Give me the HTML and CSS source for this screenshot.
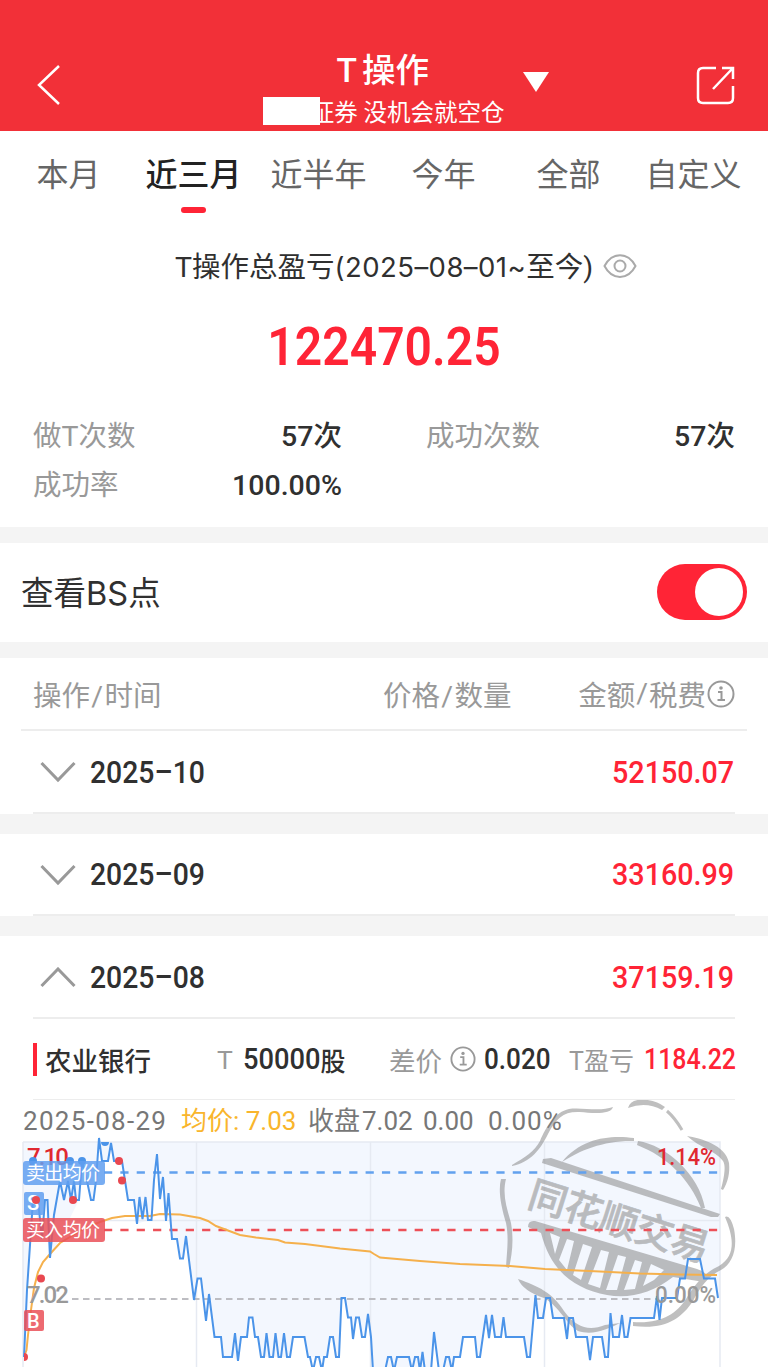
FILE: index.html
```html
<!DOCTYPE html>
<html lang="zh-CN">
<head>
    <meta charset="UTF-8">
    <title>T操作</title>
    <link rel="stylesheet" href="styles.css">
</head>
<body>
    <header class="header">
        <svg class="back-icon" width="26" height="42" viewBox="0 0 26 42"><path d="M23 2 L3 21 L23 40"/></svg>
        <div class="header-center">
            <h1 class="title"><span>T</span>操作<i class="dropdown"></i></h1>
            <div class="account"><span class="mask"></span>证券 没机会就空仓</div>
        </div>
        <svg class="share-icon" width="40" height="40" viewBox="0 0 40 40">
            <path d="M20 3 H7 Q2 3 2 8 V33 Q2 38 7 38 H32 Q37 38 37 33 V21"/>
            <path d="M26 3 H37 V14 M36.500 3.500 L17 24"/>
        </svg>
    </header>

    <nav class="tabs">
        <a>本月</a>
        <a class="active">近三月</a>
        <a>近半年</a>
        <a>今年</a>
        <a>全部</a>
        <a>自定义</a>
    </nav>

    <section class="summary">
        <div class="summary-label">
            <span>T操作总盈亏<span class="range">(2025–08–01~</span>至今)</span>
            <svg width="34" height="26" viewBox="0 0 34 26">
                <path d="M1.500 13 C9 -1.500 25 -1.500 32.500 13 C25 27.500 9 27.500 1.500 13 Z"/>
                <circle cx="17" cy="13" r="5.500"/>
            </svg>
        </div>
        <div class="total">122470.25</div>
        <div class="stats">
            <div class="stat"><label>做T次数</label><b>57次</b></div>
            <div class="stat"><label>成功次数</label><b>57次</b></div>
            <div class="stat"><label>成功率</label><b>100.00%</b></div>
        </div>
    </section>

    <section class="switch-row">
        <span>查看<span class="bs">BS</span>点</span>
        <div class="switch"></div>
    </section>

    <section class="list">
        <div class="list-head">
            <span class="col-op">操作<i>/</i>时间</span>
            <span class="col-price">价格<i>/</i>数量</span>
            <span class="col-amount">金额<i>/</i>税费<svg class="info" width="28" height="28" viewBox="0 0 28 28"><circle cx="14" cy="14" r="12.500"/><path d="M11 12 H14.500 V20 M10.500 20 H18"/><circle class="dot" cx="14" cy="8" r="1.800"/></svg></span>
        </div>

        <div class="month">
            <svg class="arrow" width="36" height="22" viewBox="0 0 36 22"><path d="M1.500 2 L18 19 L34.500 2"/></svg>
            <span class="month-name">2025–10</span>
            <span class="amount">52150.07</span>
        </div>
        <div class="month">
            <svg class="arrow" width="36" height="22" viewBox="0 0 36 22"><path d="M1.500 2 L18 19 L34.500 2"/></svg>
            <span class="month-name">2025–09</span>
            <span class="amount">33160.99</span>
        </div>
        <div class="month open">
            <svg class="arrow" width="36" height="22" viewBox="0 0 36 22"><path d="M1.500 19 L18 2 L34.500 19"/></svg>
            <span class="month-name">2025–08</span>
            <span class="amount">37159.19</span>
        </div>

        <div class="stock">
            <span class="stock-name">农业银行</span>
            <span class="cell-t"><em>T</em><b><span class="num">50000</span>股</b></span>
            <span class="cell-diff"><em>差价</em><svg class="info" width="26" height="26" viewBox="0 0 28 28"><circle cx="14" cy="14" r="12.500"/><path d="M11 12 H14.500 V20 M10.500 20 H18"/><circle class="dot" cx="14" cy="8" r="1.800"/></svg><b class="num">0.020</b></span>
            <span class="cell-profit"><em>T盈亏</em><b class="num">1184.22</b></span>
        </div>
    </section>

    <section class="chart-box">
        <div class="quote">
            <span class="q-date">2025-08-29</span>
            <span class="q-avg">均价: 7.03</span>
            <span class="q-close">收盘</span>
            <span class="q-price">7.02</span>
            <span class="q-change">0.00</span>
            <span class="q-percent">0.00%</span>
        </div>

        <svg class="chart" width="768" height="267" viewBox="0 1100 768 267">
            <!-- area above the price line -->
            <path class="area" d="M23 1142 H720 V1298 H718 L715 1278.500 H704 L700 1259 H688 L685 1278.500 H680 L677 1298 H662 L659.500 1320 L657 1296 L654 1318 H630.500 L627.500 1337 H624.500 L622 1315 L619 1337 H613 L610.500 1313 L608 1357 H605 L602 1337 H593 L590 1360 L587 1337 H576 L573 1318 H569 L567 1339 L564 1318 H553 L550 1298 H546 L543 1318 H538 L535.500 1295 L530 1357 H527 L524 1337 H506 L503.500 1317 L501 1337 H495 L492 1315 L489 1337 L486 1315 L480 1357 H477 L475 1337 H463 L460 1357 H454 L452 1371 L443 1371 L439 1371 L434 1332 L431 1371 H373 L371 1337 L368 1314 L365 1337 H362 L359 1317.500 H356 L353 1339 L351 1317.500 H348 L345 1298 H341.500 L339 1357 H336 L333 1337 H330 L327 1357 H308 L304.500 1337 H293 L290 1357 H261 L258 1337 H255 L252.500 1317.500 H249 L247 1337 H241 L238 1361 L232 1357 H223 L221 1337 H214.500 L209 1294 L206 1321 L201 1278.500 H197.500 L194 1300 L186 1236 L183 1258.500 H180 L177 1239 H172 L168.500 1193 L166 1221 L163 1177 L160 1199 L157 1154 L151.500 1220 H148 L137 1224 L134 1200 H128 L122 1161 H114 L111 1143 L108 1161 H102 L99 1142 L93.500 1200 H91 L82 1161 L79 1200 L50 1258 L45 1200 L42 1239 L33 1200 L24 1357 H23 Z"/>
            <g class="grid">
                <path d="M23 1142 H720 V1367 M23 1142 V1367 M196.500 1142 V1367 M370.500 1142 V1367 M544.500 1142 V1367 M23 1220.500 H720"/>
            </g>

            <!-- watermark stamp -->
            <g class="stamp">
                <path d="M512 1165 C524 1158 535 1151 540 1141 C546 1127 555 1112 569 1109 C581 1107 600 1112 613 1107 C611 1115 592 1113 580 1112 C564 1111 556 1118 548 1134 C540 1150 531 1162 512 1166 Z"/>
                <path d="M628 1108 Q630 1100 642 1099.500 Q656 1100 665 1107 L662 1110 Q646 1101 628 1108 Z"/>
                <path class="thin" d="M667 1111 Q675 1118 682 1130"/>
                <path d="M687 1136 C700 1138 726 1145 729 1163 C730 1173 728 1182 723 1190 L721 1189 Q727 1167 723 1161 C715 1150 700 1148 687 1136 Z"/>
                <path d="M725 1217 Q730 1214 734 1229 C738 1250 732 1264 721 1270 C708 1276 699 1289 693 1301 C681 1319 665 1330 633 1326 V1322 C661 1324 676 1314 686 1299 C695 1284 705 1272 719 1266 C737 1255 733 1236 725 1217 Z"/>
                <path d="M501 1179 H506 C502 1195 507 1208 511 1223 C514 1240 512 1255 509 1268 L506 1267 C507 1250 509 1238 506 1223 C501 1206 498 1191 501 1179 Z"/>
                <path d="M518 1279 C538 1286 553 1293 564 1311 C577 1329 590 1331 605 1325 L620 1323 C608 1329 593 1336 578 1331 C566 1324 560 1307 544 1298 Q523 1291 518 1279 Z"/>
                <path d="M562 1162 C582 1137 612 1135 634 1138 V1141 C606 1140 580 1150 562 1162 Z"/>
                <path d="M638 1141 C666 1145 699 1174 705 1208 L701 1208 C690 1180 668 1157 637 1145 Z"/>
                <path d="M543 1159 L551 1158 L720 1214 L718 1217 L711 1217 L542 1163 Z"/>
                <path fill-rule="evenodd" d="M528 1227 Q528 1220 535 1221 L697 1269 Q712 1274 704 1282 L673 1277 C652 1293 630 1299 607 1295 C575 1289 551 1272 541 1233 L528 1227 Z M550 1233 L560 1237 L555 1254 Z M567 1239 L574 1241 L567 1270 L559 1260 Z M583 1244 L592 1247 L581 1280 L573 1275 Z M601 1250 L609 1252 L600 1288 L588 1284 Z M618 1255 L626 1257 L617 1290 L606 1290 Z M635 1260 L642 1262 L635 1289 L624 1290 Z M651 1264 L664 1270 L654 1280 L643 1286 Z"/>
                <text transform="translate(526 1206) rotate(17.500)" textLength="187" x="0" y="0">同花顺交易</text>
            </g>

            <path class="dash sell" d="M104 1172.500 H720"/>
            <path class="dash buy" d="M104 1230 H720"/>
            <path class="dash zero" d="M72 1299 H656"/>

            <path class="avg" d="M24 1357 L26.500 1350 L28 1335 L31 1310 L34 1288 L38 1272 L43 1262 L50 1254 L60 1243 L70 1237 L85 1228 L100 1222 L112 1218 L125 1216 H150 L160 1214 L180 1214.500 L200 1218 L208 1221 L216 1226 L228 1230.500 L240 1235 L256 1237.500 L278 1240 L285 1242.500 L305 1244 L340 1248.500 L370 1251.500 L374 1254 L380 1257.500 L420 1261 L460 1264 L510 1266 L545 1269 L600 1271.500 L640 1273.500 L680 1274.500 L717 1275"/>
            <path class="price" d="M24 1357 L27 1290 L33 1200 L38 1200 L42 1239 L45 1200 H47.500 L50 1258 L54 1215 L60 1181 L64 1200 L68 1181 L71 1200 L74 1181 L76 1200 H79 L82 1161 L87 1181 L91 1200 H93.500 L96 1181 L99 1138 L102 1161 H108 L111 1143 L114 1161 H122 L128 1200 H134 L137 1224 L139.500 1197 L142.500 1219 L145.500 1197 L148 1220 H151.500 L154 1180 L157 1154 L160 1199 L163 1177 L166 1221 L168.500 1193 L172 1239 H177 L180 1258.500 H183 L186 1236 L194 1300 L197.500 1278.500 H201 L206 1321 L209 1294 L214.500 1337 H221 L223 1357 H232 L235 1333 L238 1361 L241 1337 H247 L249 1317.500 H252.500 L255 1337 H258 L261 1357 H264 L266.500 1333 L269.500 1357 H273 L275.500 1333 L278.500 1357 H281 L284 1333 L287 1357 H290 L293 1337 H304.500 L308 1357 H310 L313 1371 L316 1357 H319 L322 1371 L324 1357 H327 L330 1337 H333 L336 1357 H339 L341.500 1298 H345 L348 1317.500 H351 L353 1339 L356 1317.500 H359 L362 1337 H365 L368 1314 L371 1337 L373 1371 H385 L388 1357 H391 L394 1371 L397 1357 H409 L412 1371 L415 1357 H418 L420 1371 L422.500 1352 L425 1371 H431 L434 1332 L439 1371 H443 L446 1357 H449 L452 1371 L454 1357 H460 L463 1337 H475 L477 1357 H480 L486 1315 L489 1338 L492 1315 L495 1337 H501 L503.500 1317 L506 1337 H524 L527 1357 H530 L535.500 1295 L538 1318 H543 L546 1298 H550 L553 1318 H564 L567 1339 L569 1318 H573 L576 1337 H587 L590 1360 L593 1337 H602 L605 1357 H608 L610.500 1313 L613 1337 H619 L622 1315 L624.500 1337 H627.500 L630.500 1318 H654 L657 1296 L659.500 1320 L662 1298 H677 L680 1278.500 H685 L688 1259 H700 L704 1278.500 H715 L718 1298"/>

            <text class="axis up" x="27" y="1165" textLength="42">7.10</text>
            <text class="axis up" x="657" y="1165" textLength="59" lengthAdjust="spacingAndGlyphs">1.14%</text>
            <text class="axis mid" x="27" y="1303" textLength="42">7.02</text>
            <text class="axis mid" x="655" y="1303" textLength="61" lengthAdjust="spacingAndGlyphs">0.00%</text>

            <g class="sell-dot">
                <circle cx="33" cy="1161" r="4"/><circle cx="70" cy="1161" r="4"/><circle cx="82" cy="1161" r="4"/>
                <path d="M101 1142 A4 4 0 0 0 109 1142 Z"/>
            </g>

            <rect class="tag-sell" x="23" y="1161" width="82" height="24" rx="3"/>
            <text class="tag-text" x="26" y="1180" textLength="74">卖出均价</text>
            <rect class="tag-sell" x="24" y="1192" width="20" height="23" rx="2"/>
            <text class="tag-text mark" x="27" y="1210">S</text>
            <rect class="tag-buy" x="23" y="1218" width="82" height="24" rx="3"/>
            <text class="tag-text" x="26" y="1237" textLength="74">买入均价</text>
            <rect class="tag-buy" x="24" y="1310" width="20" height="21" rx="2"/>
            <text class="tag-text mark" x="27" y="1328">B</text>

            <g class="buy-dot">
                <circle cx="36" cy="1200" r="4"/><circle cx="73" cy="1200" r="4"/><circle cx="119" cy="1161" r="4"/>
                <circle cx="122" cy="1180.500" r="4"/><circle cx="41" cy="1278.500" r="4"/><path d="M24 1353 A4 4 0 0 1 24 1361 Z"/>
            </g>
        </svg>
    </section>
</body>
</html>
```
FILE: styles.css
```css
:root {
    --header-red: #f23038;
    --red: #ff2436;
    --dark: #303030;
    --gray: #999;
    --line: #ededed;
    --band: #f4f4f4;
}

* {
    margin: 0;
    padding: 0;
    box-sizing: border-box;
}

body {
    width: 768px;
    height: 1367px;
    overflow: hidden;
    background: #fff;
    color: var(--dark);
    font-family: Roboto, "Noto Sans CJK SC", sans-serif;
    white-space: nowrap;
}

svg {
    display: block;
    fill: none;
    flex: none;
}

em, i {
    font-style: normal;
}

/* header */
.header {
    height: 131px;
    padding: 48px 32px 0 36px;
    background: var(--header-red);
    color: #fff;
    display: flex;
    justify-content: space-between;
}

.back-icon {
    margin-top: 16px;
    stroke: #fff;
    stroke-width: 2.5;
}

.share-icon {
    margin-top: 17px;
    stroke: #fff;
    stroke-width: 2.5;
}

.header-center {
    width: 242px;
    margin-right: -9px;
}

.title {
    position: relative;
    height: 46px;
    padding-left: 74px;
    font-size: 33.5px;
    line-height: 46px;
    font-weight: 500;
}

.title span {
    margin-right: 5px;
}

.dropdown {
    position: absolute;
    left: 260px;
    top: 24px;
    border: 13px solid transparent;
    border-top: 20px solid #fff;
    border-bottom: 0;
}

.account {
    position: relative;
    height: 36px;
    line-height: 38px;
    font-size: 23.5px;
    text-align: right;
}

.mask {
    position: absolute;
    left: 0;
    top: 3px;
    width: 57px;
    height: 28px;
    background: #fff;
}

/* tabs */
.tabs {
    height: 96px;
    padding: 20px 12px 0 6px;
    display: grid;
    grid-template-columns: repeat(6, 125px);
    font-size: 32px;
    line-height: 48px;
    text-align: center;
    color: #666;
}

.tabs .active {
    color: #222;
    font-weight: 500;
}

.tabs .active::after {
    content: "";
    display: block;
    width: 25px;
    height: 6px;
    margin: 8px auto 0;
    border-radius: 3px;
    background: var(--red);
}

/* summary */
.summary {
    height: 300px;
}

.summary-label {
    height: 78px;
    padding-left: 175px;
    display: flex;
    align-items: center;
    gap: 10px;
    font-size: 28.5px;
}

.summary-label > span {
    margin-top: -3px;
}

.range {
    font-family: Inter, sans-serif;
    font-size: 27.5px;
    letter-spacing: 0.45px;
}

.summary-label svg {
    stroke: #aaa;
    stroke-width: 2;
}

.total {
    height: 82px;
    line-height: 84px;
    text-align: center;
    font-size: 54px;
    font-weight: 600;
    transform: scaleX(0.89);
    color: var(--red);
}

.stats {
    padding: 25px 33px 0;
    display: grid;
    grid-template-columns: 309px 309px;
    justify-content: space-between;
    font-size: 28.5px;
    line-height: 49px;
}

.stat {
    display: flex;
    justify-content: space-between;
}

.stat label {
    color: var(--gray);
}

.stat b {
    font-weight: 500;
}

/* switch */
.switch-row {
    height: 131px;
    padding: 0 21px 1px;
    border: solid var(--band);
    border-width: 16px 0;
    display: flex;
    justify-content: space-between;
    align-items: center;
    font-size: 32.5px;
}

.switch-row > span {
    margin-top: -3px;
}

.bs {
    font-family: Inter, sans-serif;
}

.switch {
    width: 90px;
    height: 56px;
    padding: 4px;
    border-radius: 28px;
    background: var(--red);
}

.switch::after {
    content: "";
    display: block;
    width: 48px;
    height: 48px;
    margin-left: auto;
    border-radius: 50%;
    background: #fff;
}

/* list */
.list-head {
    height: 73px;
    margin: 0 21px;
    padding: 0 12px;
    border-bottom: 2px solid var(--line);
    display: grid;
    grid-template-columns: 350px 1fr auto;
    align-items: center;
    font-size: 28.5px;
    color: var(--gray);
}

.list-head i {
    margin: 0 1.3px;
}

.col-amount {
    display: flex;
    align-items: center;
    gap: 1px;
}

.list-head .col-amount i {
    margin: 0;
}

.info {
    stroke: var(--gray);
    stroke-width: 2;
}

.info .dot {
    fill: var(--gray);
    stroke: none;
}

.month {
    height: 102.5px;
    padding: 0 34px 0 40px;
    border-bottom: 20px solid var(--band);
    background: linear-gradient(var(--line), var(--line)) 33px 100% / 702px 2px no-repeat padding-box;
    display: flex;
    align-items: center;
    font-size: 31.5px;
    font-weight: 500;
}

.month.open {
    height: 83px;
    border-bottom: 0;
}

.arrow {
    margin-right: 14px;
    stroke: var(--gray);
    stroke-width: 3;
}

.month-name {
    transform: scaleX(0.9);
    transform-origin: left;
}

.amount {
    margin-left: auto;
    transform: scaleX(0.91);
    transform-origin: right;
    color: var(--red);
}

.stock {
    height: 81px;
    margin: 0 33px;
    border-bottom: 1px solid var(--line);
    display: grid;
    grid-template-columns: 184px 172px 180px auto;
    align-items: center;
    font-size: 26.5px;
}

.stock span {
    display: flex;
    align-items: center;
}

.stock .stock-name {
    font-weight: 500;
}

.stock-name::before {
    content: "";
    width: 4px;
    height: 33px;
    margin-right: 8px;
    background: var(--red);
}

.stock em {
    color: var(--gray);
}

.stock b {
    display: flex;
    font-weight: 500;
    transform-origin: left;
}

.stock .num {
    font-size: 29px;
}

.cell-t {
    gap: 10px;
}

.cell-t b {
    transform: scaleX(0.94);
}

.cell-diff {
    gap: 8px;
}

.cell-diff b {
    transform: scaleX(0.9);
}

.cell-profit {
    gap: 10px;
}

.cell-profit em {
    font-size: 25px;
}

.cell-profit b {
    transform: scaleX(0.86);
    color: var(--red);
}

/* chart */
.chart-box {
    height: 267px;
}

.quote {
    height: 42px;
    padding-left: 23px;
    display: grid;
    grid-template-columns: 158px 127px 54px 61px 65px auto;
    align-items: center;
    font-size: 26px;
    line-height: 42px;
    color: #777;
}

.q-date {
    letter-spacing: 1.3px;
}

.quote .q-avg {
    color: #f9b52c;
}

.q-percent {
    letter-spacing: 1px;
}

.chart {
    margin-top: -42px;
    position: relative;
}

.area {
    fill: #f3f7fe;
}

.grid {
    stroke: #e6eaf2;
    stroke-width: 1.5;
}

.stamp {
    fill: #858585;
    opacity: 0.52;
}

.stamp .thin {
    fill: none;
    stroke: #858585;
    stroke-width: 3;
}

.stamp text {
    font-size: 38px;
    font-weight: 500;
    stroke: #858585;
    stroke-width: 0.7;
}

.dash {
    stroke-width: 2.3;
    stroke-dasharray: 8.2 8.15;
}

.sell { stroke: #62a1ee; }
.buy { stroke: #ed5058; }
.zero {
    stroke: #bdbdc2;
    stroke-width: 1.8;
    stroke-dasharray: 6.5 4.5;
}

.avg {
    stroke: #f5b04c;
    stroke-width: 2;
}

.price {
    stroke: #4b94e9;
    stroke-width: 2;
}

.axis {
    font-size: 24px;
    font-weight: 500;
}

.up { fill: #e02830; }
.mid { fill: #999; }

.sell-dot { fill: #4b94e9; }
.buy-dot { fill: #e94850; }

.tag-sell {
    fill: #609ff0;
    fill-opacity: 0.85;
}

.tag-buy {
    fill: #ea5058;
    fill-opacity: 0.85;
}

.tag-text {
    fill: #fff;
    font-size: 19px;
}

.mark {
    font-size: 20px;
    font-weight: 500;
}
```
